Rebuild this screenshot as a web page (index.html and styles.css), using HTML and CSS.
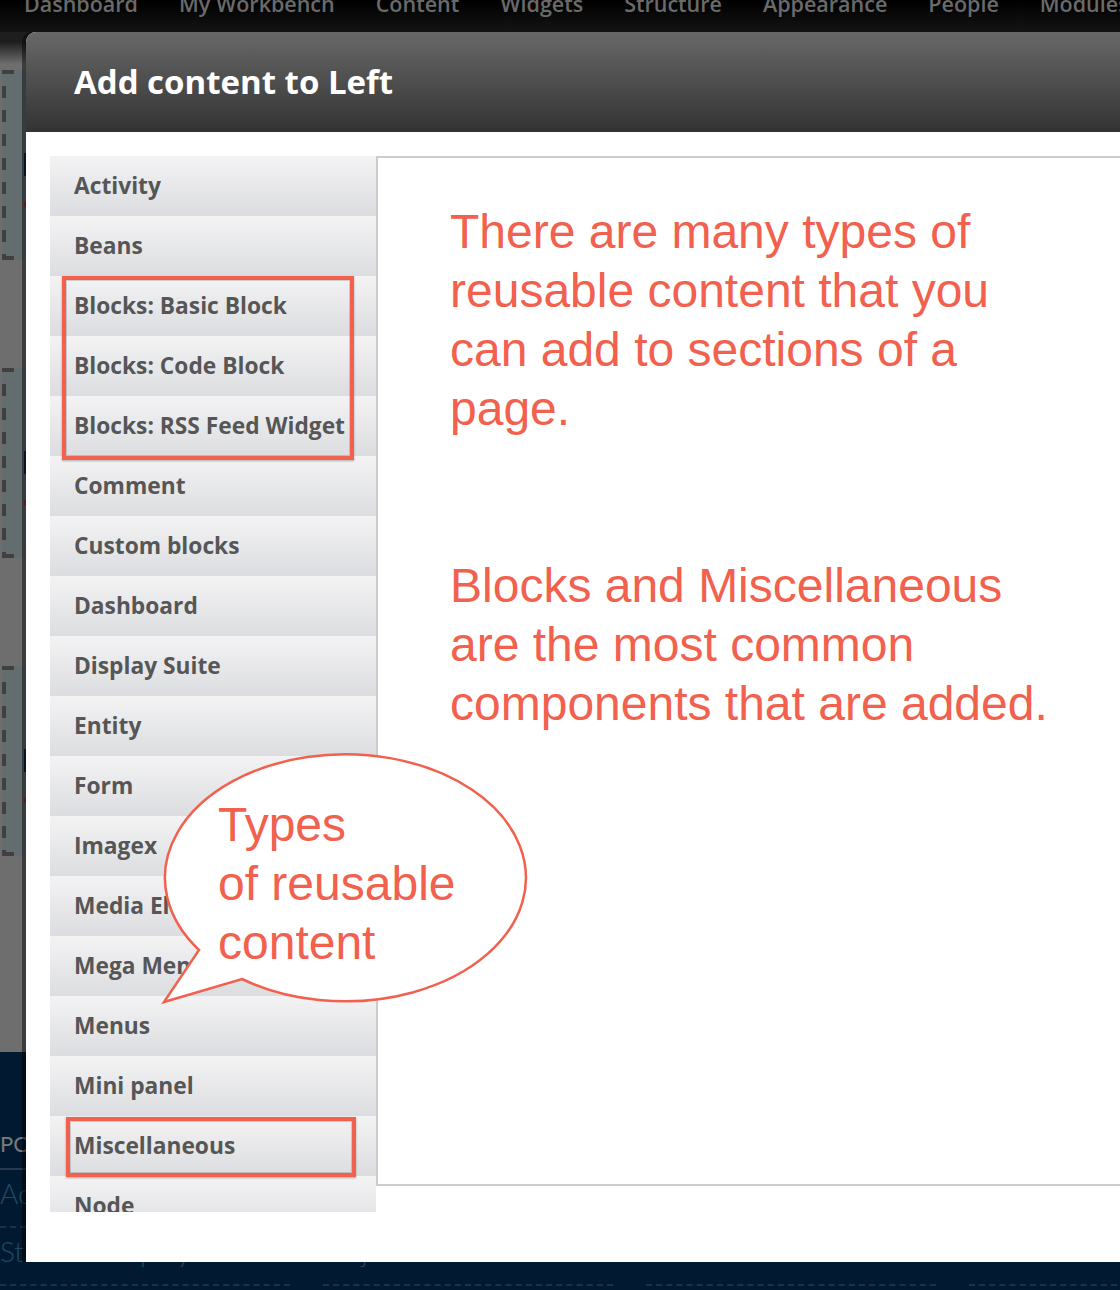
FILE: index.html
```html
<!DOCTYPE html>
<html lang="en">
<head>
<meta charset="utf-8">
<title>Add content to Left</title>
<link rel="stylesheet" href="styles.css">
</head>
<body>
<div class="page">
  <nav class="admin-nav">
    <ul>
      <li>Dashboard</li>
      <li>My Workbench</li>
      <li>Content</li>
      <li>Widgets</li>
      <li>Structure</li>
      <li>Appearance</li>
      <li>People</li>
      <li>Modules</li>
    </ul>
  </nav>
  <main class="page-main">
    <div class="region"><span class="mark-navy"></span><span class="mark-red"></span></div>
    <div class="region"><span class="mark-navy"></span><span class="mark-red"></span></div>
    <div class="region"><span class="mark-navy"></span><span class="mark-red"></span></div>
  </main>
  <footer class="page-footer">
    <h2 class="footer-title">PC</h2>
    <div class="footer-links">
      <a href="#">Academic Calendar</a>
      <a href="#">Admissions</a>
      <a href="#">Athletics</a>
      <a href="#">Alumni</a>
      <a href="#">Student Employment</a>
      <a href="#">Majors and Minors</a>
      <a href="#">Career Center</a>
      <a href="#">Financial Aid</a>
    </div>
  </footer>
</div>

<div class="modal">
  <header class="modal-header">
    <h1 class="modal-title">Add content to Left</h1>
  </header>
  <div class="modal-body">
    <ul class="category-list">
      <li>Activity</li>
      <li>Beans</li>
      <li>Blocks: Basic Block</li>
      <li>Blocks: Code Block</li>
      <li>Blocks: RSS Feed Widget</li>
      <li>Comment</li>
      <li>Custom blocks</li>
      <li>Dashboard</li>
      <li>Display Suite</li>
      <li>Entity</li>
      <li>Form</li>
      <li>Imagex</li>
      <li>Media Element</li>
      <li>Mega Menu</li>
      <li>Menus</li>
      <li>Mini panel</li>
      <li>Miscellaneous</li>
      <li>Node</li>
    </ul>
    <section class="category-panel">
      <p>There are many types of<br>reusable content that you<br>can add to sections of a<br>page.</p>
      <p>Blocks and Miscellaneous<br>are the most common<br>components that are added.</p>
    </section>
  </div>
  <div class="highlight highlight-blocks"></div>
  <div class="highlight highlight-misc"></div>
  <div class="callout">
    <svg class="callout-shape" width="370" height="258" viewBox="0 0 370 258">
      <path d="M 82 229 A 180.5 123.5 0 1 0 39 200 L 4 252 Z" fill="#ffffff" stroke="#f2604e" stroke-width="2.5" stroke-linejoin="miter"/>
    </svg>
    <p class="callout-text">Types<br>of reusable<br>content</p>
  </div>
</div>
</body>
</html>
```

FILE: styles.css
```css
html, body {
  margin: 0;
  padding: 0;
}

body {
  width: 1120px;
  height: 1290px;
  overflow: hidden;
  position: relative;
  background: #021a31;
  font-family: "Open Sans", "DejaVu Sans", sans-serif;
}

.page {
  display: flex;
  flex-direction: column;
  height: 1290px;
}

/* Admin toolbar */
.admin-nav {
  height: 32px;
  flex: none;
  overflow: hidden;
  background: linear-gradient(#000000, #141414);
}

.admin-nav ul {
  list-style: none;
  margin: -12px 0 0;
  padding: 0 0 0 24px;
  display: flex;
  gap: 41px;
  font-size: 21.5px;
  font-weight: 600;
  line-height: 32px;
  color: #6a6a6a;
  white-space: nowrap;
}

/* Page behind overlay */
.page-main {
  height: 1020px;
  flex: none;
  box-sizing: border-box;
  padding: 38px 0 0 2px;
  display: flex;
  flex-direction: column;
  gap: 108px;
  background: linear-gradient(#1e1e1e 0, #1e1e1e 10px, #6e6e6e 32px, #6e6e6e 100%);
}

.region {
  width: 320px;
  height: 190px;
  box-sizing: border-box;
  padding: 83px 0 0 22px;
  display: flex;
  flex-direction: column;
  background-color: #636d70;
  background-image:
    repeating-linear-gradient(to bottom, #404040 0 4px, transparent 4px 16px, #404040 16px 24px),
    repeating-linear-gradient(to right, #404040 0 12px, transparent 12px 24px),
    repeating-linear-gradient(to right, #404040 0 12px, transparent 12px 24px);
  background-size: 4px 100%, 100% 4px, 100% 4px;
  background-position: left top, left top, left bottom;
  background-repeat: no-repeat;
}

.mark-navy {
  display: block;
  width: 120px;
  height: 23px;
  background: #132648;
}

.mark-red {
  display: block;
  width: 60px;
  height: 5px;
  margin-top: 26px;
  background: #a33434;
}

.page-footer {
  flex: 1;
  padding-top: 79px;
  background: #021a31;
}

.footer-title {
  margin: 0;
  padding: 0 0 11px;
  font-family: Lato, "Open Sans", sans-serif;
  font-weight: 400;
  font-size: 22px;
  line-height: 26px;
  color: #7a7a7a;
  border-bottom: 2px solid #283a4c;
}

.footer-links {
  display: grid;
  grid-template-columns: repeat(4, 290px);
  column-gap: 33px;
}

.footer-links a {
  display: block;
  padding: 6px 0 16px;
  font-family: Lato, "Open Sans", sans-serif;
  font-weight: 300;
  font-size: 28px;
  line-height: 34px;
  color: #1f4a66;
  text-decoration: none;
  white-space: nowrap;
  border-bottom: 2px dashed #1b3249;
}

/* Modal */
.modal {
  position: absolute;
  left: 26px;
  top: 32px;
  width: 1120px;
  height: 1230px;
  background: #ffffff;
  border-top-left-radius: 10px;
  box-shadow: -4px 0 0 rgba(0, 0, 0, 0.45);
  display: flex;
  flex-direction: column;
}

.modal-header {
  height: 100px;
  flex: none;
  box-sizing: border-box;
  padding-left: 48px;
  border-top-left-radius: 10px;
  background: linear-gradient(#686868, #333333);
}

.modal-title {
  margin: 0;
  font-family: "Open Sans", "DejaVu Sans", sans-serif;
  font-weight: 700;
  font-size: 33px;
  line-height: 100px;
  color: #ffffff;
  white-space: nowrap;
}

.modal-body {
  flex: 1;
  display: flex;
  align-items: flex-start;
  padding: 24px 0 0 24px;
}

.category-list {
  list-style: none;
  margin: 0;
  padding: 0;
  width: 326px;
  height: 1056px;
  flex: none;
  overflow: hidden;
}

.category-list li {
  height: 60px;
  box-sizing: border-box;
  padding-left: 24px;
  line-height: 60px;
  font-size: 22.75px;
  font-weight: 700;
  color: #565656;
  white-space: nowrap;
  overflow: hidden;
  background: linear-gradient(#f3f3f4, #dcdde0);
}

.category-panel {
  flex: 1;
  height: 1030px;
  box-sizing: border-box;
  border: 2px solid #cccccc;
  border-right: 0;
  padding: 44px 0 0 72px;
  font-family: "Liberation Sans", Arial, sans-serif;
  font-size: 48px;
  line-height: 59px;
  color: #f2604e;
}

.category-panel p {
  margin: 0;
  white-space: nowrap;
}

.category-panel p + p {
  margin-top: 118px;
}

/* Annotations */
.highlight {
  position: absolute;
  box-sizing: border-box;
  border: 4px solid #f2604e;
  box-shadow: inset 0 0 0 1px rgba(0, 0, 0, 0.15), 0 1px 2px rgba(0, 0, 0, 0.3);
}

.highlight-blocks {
  left: 36px;
  top: 244px;
  width: 292px;
  height: 184px;
}

.highlight-misc {
  left: 40px;
  top: 1085px;
  width: 290px;
  height: 60px;
}

.callout {
  position: absolute;
  left: 134px;
  top: 718px;
  width: 370px;
  height: 258px;
}

.callout-shape {
  position: absolute;
  left: 0;
  top: 0;
}

.callout-text {
  position: relative;
  margin: 0;
  padding: 45px 0 0 58px;
  font-family: "Liberation Sans", Arial, sans-serif;
  font-size: 48px;
  line-height: 59px;
  color: #f2604e;
  white-space: nowrap;
}
```
